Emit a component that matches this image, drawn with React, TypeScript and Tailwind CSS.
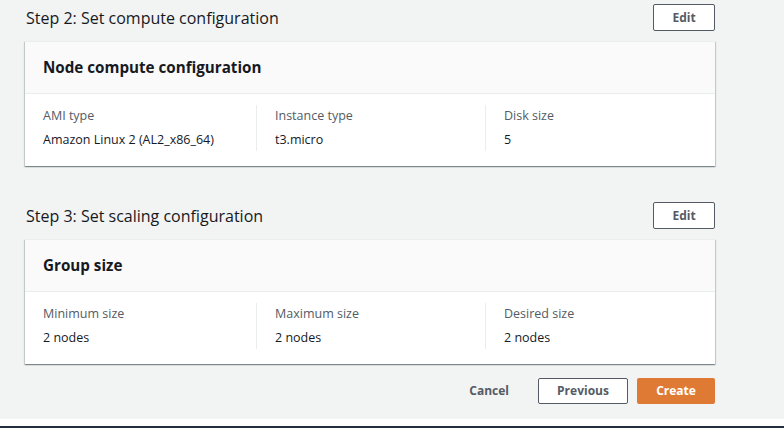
import React from "react";

const font = { fontFamily: '"Open Sans", "Noto Sans", sans-serif' };

function EditRow({ title }: { title: string }) {
  return (
    <div className="flex items-center justify-between">
      <div className="text-[16px] leading-[22px] text-[#16191f] pl-px">{title}</div>
      <button className="w-[62px] h-[27px] border border-[#545b64] rounded-[2px] bg-white text-[12px] font-bold text-[#545b64]">
        Edit
      </button>
    </div>
  );
}

const colCls = [
  "w-[213px]",
  "w-[229px] border-l border-[#eaeded] pl-[18px]",
  "flex-1 border-l border-[#eaeded] pl-[18px]",
];

function Card({ heading, items }: { heading: string; items: [string, string][] }) {
  return (
    <div className="mt-[10px] bg-white border-t border-[#eaeded] shadow-[0_1px_1px_0_rgba(0,28,36,0.3),1px_1px_1px_0_rgba(0,28,36,0.15),-1px_1px_1px_0_rgba(0,28,36,0.15)]">
      <div className="h-[52px] flex items-center px-[18px] bg-[#fafafa] border-b border-[#eaeded]">
        <div className="text-[15.2px] font-bold text-[#16191f]">{heading}</div>
      </div>
      <div className="flex pl-[18px] pr-[18px] pt-[11px] pb-[15px]">
        {items.map(([label, value], i) => (
          <div key={label} className={colCls[i]}>
            <div className="text-[12.5px] leading-[22px] text-[#545b64]">{label}</div>
            <div className="mt-[2px] text-[12.5px] leading-[22px] text-[#16191f]">{value}</div>
          </div>
        ))}
      </div>
    </div>
  );
}

export default function App() {
  return (
    <div className="w-[784px] h-[428px] flex flex-col bg-white" style={font}>
      <div className="h-[419px] bg-[#f2f3f3] pl-[25px] pt-[4px]">
        <div className="w-[690px]">
          <EditRow title="Step 2: Set compute configuration" />
          <Card
            heading="Node compute configuration"
            items={[
              ["AMI type", "Amazon Linux 2 (AL2_x86_64)"],
              ["Instance type", "t3.micro"],
              ["Disk size", "5"],
            ]}
          />
          <div className="mt-[36px]">
            <EditRow title="Step 3: Set scaling configuration" />
          </div>
          <Card
            heading="Group size"
            items={[
              ["Minimum size", "2 nodes"],
              ["Maximum size", "2 nodes"],
              ["Desired size", "2 nodes"],
            ]}
          />
          <div className="mt-[14px] flex justify-end items-center">
            <button className="h-[26px] px-[20px] text-[12px] font-bold text-[#545b64] mr-[9px]">Cancel</button>
            <button className="w-[90px] h-[26px] border border-[#545b64] rounded-[2px] bg-white text-[12px] font-bold text-[#545b64]">
              Previous
            </button>
            <button className="ml-[9px] w-[78px] h-[26px] rounded-[2px] bg-[#df7a34] text-[12px] font-bold text-white">
              Create
            </button>
          </div>
        </div>
      </div>
      <div className="h-[7px] bg-white" />
      <div className="h-[2px] bg-[#232f3e]" />
    </div>
  );
}
